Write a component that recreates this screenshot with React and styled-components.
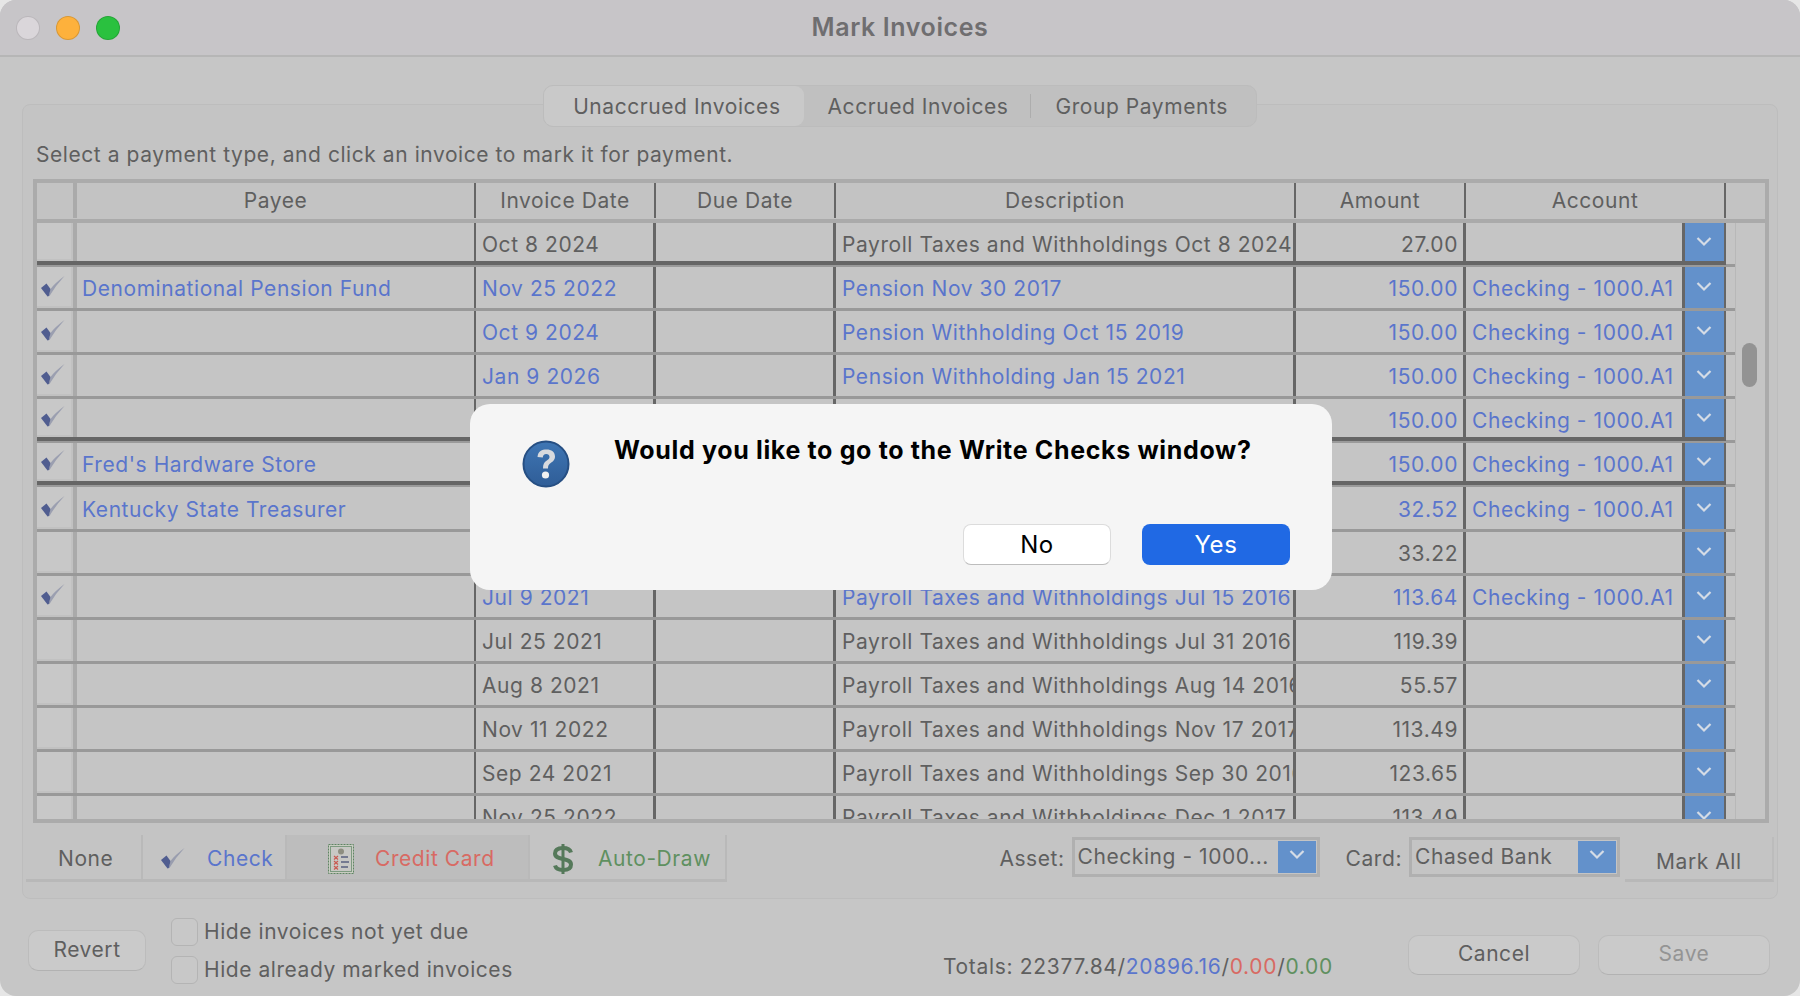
import styled, { createGlobalStyle } from "styled-components";

const GlobalStyle = createGlobalStyle`
  html, body {
    margin: 0;
    padding: 0;
    background: #e6e6e6;
  }
  * {
    box-sizing: border-box;
  }
`;

const blue = "#5a75cc";
const red = "#d86a63";
const green = "#5f9060";
const ink = "#5f5f5f";

const invoices = [
  { date: "Oct 8 2024", desc: "Payroll Taxes and Withholdings Oct 8 2024", amount: "27.00", heavy: true },
  { marked: true, payee: "Denominational Pension Fund", date: "Nov 25 2022", desc: "Pension Nov 30 2017", amount: "150.00" },
  { marked: true, date: "Oct 9 2024", desc: "Pension Withholding Oct 15 2019", amount: "150.00" },
  { marked: true, date: "Jan 9 2026", desc: "Pension Withholding Jan 15 2021", amount: "150.00" },
  { marked: true, amount: "150.00", heavy: true },
  { marked: true, payee: "Fred's Hardware Store", amount: "150.00", heavy: true },
  { marked: true, payee: "Kentucky State Treasurer", amount: "32.52" },
  { amount: "33.22" },
  { marked: true, date: "Jul 9 2021", desc: "Payroll Taxes and Withholdings Jul 15 2016", amount: "113.64" },
  { date: "Jul 25 2021", desc: "Payroll Taxes and Withholdings Jul 31 2016", amount: "119.39" },
  { date: "Aug 8 2021", desc: "Payroll Taxes and Withholdings Aug 14 2016", amount: "55.57" },
  { date: "Nov 11 2022", desc: "Payroll Taxes and Withholdings Nov 17 2017", amount: "113.49" },
  { date: "Sep 24 2021", desc: "Payroll Taxes and Withholdings Sep 30 2016", amount: "123.65" },
  { date: "Nov 25 2022", desc: "Payroll Taxes and Withholdings Dec 1 2017", amount: "113.49" },
];

const CheckMark = () => (
  <svg width="26" height="24" viewBox="0 0 26 24">
    <path d="M1 13 L6.5 8.5 L10.5 14 L9 21 L7.5 21.5 Z" fill="#505d90" />
    <path d="M8.5 21 L10.5 14 Q15 8 24.5 1 Q16 10 9.5 21 Z" fill="#7d84a0" opacity="0.6" />
  </svg>
);

const Chevron = () => (
  <svg width="16" height="11" viewBox="0 0 16 11" fill="none">
    <path d="M1.5 2 L8 8.5 L14.5 2" stroke="#d5dce6" strokeWidth="2.2" />
  </svg>
);

const LedgerIcon = () => (
  <svg width="26" height="30" viewBox="0 0 26 30">
    <rect x="0.5" y="0.5" width="25" height="29" fill="#c9cdc2" stroke="#5f8463" strokeDasharray="2 1" />
    <rect x="2.5" y="2.5" width="21" height="25" fill="#c8c8c4" stroke="#7d9a80" />
    <circle cx="13" cy="7.5" r="3" fill="#8e8e80" />
    <path d="M6 12 L10 15.5 M10 12 L6 15.5 M6 17 L10 20.5 M10 17 L6 20.5 M6 22 L10 25.5 M10 22 L6 25.5" stroke="#c9584f" strokeWidth="1.2" />
    <path d="M13 13 H20 M13 18 H21 M13 23 H20" stroke="#59607f" strokeWidth="1.3" />
  </svg>
);

const DollarIcon = () => (
  <svg width="22" height="32" viewBox="0 0 22 32" fill="none">
    <path d="M11 1 V31" stroke="#55795a" strokeWidth="3" />
    <path d="M19 9.5 C18 6 15 5 11 5 C6 5 3 7 3 10.5 C3 14 6.5 15 11 16 C15.5 17 19 18 19 21.5 C19 25 16 27 11 27 C7 27 4 26 3 22.5" stroke="#55795a" strokeWidth="4" />
  </svg>
);

const QuestionIcon = () => (
  <svg width="48" height="48" viewBox="0 0 48 48">
    <defs>
      <linearGradient id="qfill" x1="0" y1="0" x2="0" y2="1">
        <stop offset="0" stopColor="#3f76b4" />
        <stop offset="1" stopColor="#2f5d97" />
      </linearGradient>
    </defs>
    <circle cx="24" cy="24" r="22.5" fill="url(#qfill)" stroke="#264f83" strokeWidth="2" />
    <path d="M15.5 17 C16 11 20 9.5 24.5 9.5 C29.5 9.5 33 12 33 16.5 C33 20.5 30 22 28 23.5 C26.5 24.6 26 26 26 28.5 H21 C21 24.5 22 22.5 24.5 20.8 C26.5 19.5 27.5 18.5 27.5 17 C27.5 15 26.2 14 24.2 14 C22 14 21 15.5 20.8 17.5 Z" fill="#d8dade" />
    <circle cx="23.5" cy="35" r="3.6" fill="#f1f1f1" />
  </svg>
);

const App = () => {
  return (
    <>
      <GlobalStyle />
      <Window>
        <TitleBar>
          <Lights>
            <Light $color="#dad6da" />
            <Light $color="#fdb13c" />
            <Light $color="#2ac13f" />
          </Lights>
          <Title>Mark Invoices</Title>
        </TitleBar>

        <Panel>
          <Tabs>
            <Tab $active $left={29} $right={23}>Unaccrued Invoices</Tab>
            <Tab $divided $left={24} $right={22}>Accrued Invoices</Tab>
            <Tab $left={24} $right={28}>Group Payments</Tab>
          </Tabs>
          <Hint>Select a payment type, and click an invoice to mark it for payment.</Hint>

          <Table>
            <HeadRow>
              <HeadCell />
              <HeadCell $line>Payee</HeadCell>
              <HeadCell $line>Invoice Date</HeadCell>
              <HeadCell $line>Due Date</HeadCell>
              <HeadCell $line>Description</HeadCell>
              <HeadCell $line>Amount</HeadCell>
              <HeadCell $line>Account</HeadCell>
              <HeadCell />
            </HeadRow>
            <TableBody>
              <Rows>
                {invoices.map((row, i) => (
                  <Row key={i} $heavy={row.heavy} $marked={row.marked}>
                    <CheckCell>{row.marked && <CheckMark />}</CheckCell>
                    <Cell $heavy={row.heavy}>{row.payee}</Cell>
                    <Cell $heavy={row.heavy} $line>{row.date}</Cell>
                    <Cell $heavy={row.heavy} $line />
                    <Cell $heavy={row.heavy} $line>{row.desc}</Cell>
                    <Cell $heavy={row.heavy} $line $right>{row.amount}</Cell>
                    <Cell $heavy={row.heavy} $line>{row.marked ? "Checking - 1000.A1" : ""}</Cell>
                    <DropCell><Chevron /></DropCell>
                  </Row>
                ))}
              </Rows>
              <ScrollTrack>
                <ScrollThumb />
              </ScrollTrack>
            </TableBody>
          </Table>

          <Toolbar>
            <Segments>
              <Segment $width={117} $pad={32}>None</Segment>
              <Segment $width={144} $pad={17} $gap={21} $color={blue}>
                <CheckMark />Check
              </Segment>
              <Segment $width={243} $pad={41} $gap={21} $color={red} $selected>
                <LedgerIcon />Credit Card
              </Segment>
              <Segment $width={197} $pad={22} $gap={24} $color={green}>
                <DollarIcon />Auto-Draw
              </Segment>
            </Segments>
            <Fields>
              <Label>Asset:</Label>
              <Combo $width={248}>
                <ComboText>Checking - 1000...</ComboText>
                <ComboDrop><Chevron /></ComboDrop>
              </Combo>
              <Label $left={26}>Card:</Label>
              <Combo $width={211}>
                <ComboText>Chased Bank</ComboText>
                <ComboDrop><Chevron /></ComboDrop>
              </Combo>
              <MarkAll>Mark All</MarkAll>
            </Fields>
          </Toolbar>
        </Panel>

        <Footer>
          <PushButton $width={118} $height={41} $lift={4}>Revert</PushButton>
          <Options>
            <Option><Box />Hide invoices not yet due</Option>
            <Option><Box />Hide already marked invoices</Option>
          </Options>
          <Totals>
            Totals: 22377.84/<Tint $color={blue}>20896.16</Tint>/<Tint $color={red}>0.00</Tint>/<Tint $color={green}>0.00</Tint>
          </Totals>
          <PushButton $width={172} $height={40}>Cancel</PushButton>
          <PushButton $width={172} $height={40} $off>Save</PushButton>
        </Footer>

        <Dialog>
          <DialogIcon><QuestionIcon /></DialogIcon>
          <DialogMain>
            <DialogText>Would you like to go to the Write Checks window?</DialogText>
            <DialogButtons>
              <DialogButton>No</DialogButton>
              <DialogButton $primary>Yes</DialogButton>
            </DialogButtons>
          </DialogMain>
        </Dialog>
      </Window>
    </>
  );
};

export default App;

const Window = styled.div`
  position: relative;
  width: 1800px;
  height: 996px;
  overflow: hidden;
  border-radius: 16px;
  background: #c6c6c6;
  color: ${ink};
  font-family: Inter, "Liberation Sans", sans-serif;
  font-size: 21px;
  letter-spacing: 0.56px;
`;
const TitleBar = styled.div`
  display: grid;
  grid-template-columns: 1fr auto 1fr;
  align-items: center;
  height: 57px;
  padding: 0 16px;
  background: #c7c5c8;
  border-bottom: 2px solid #b6b6b6;
`;
const Lights = styled.div`
  display: flex;
  gap: 16px;
`;
const Light = styled.span`
  width: 24px;
  height: 24px;
  border-radius: 50%;
  background: ${(p) => p.$color};
  border: 1px solid rgba(0, 0, 0, 0.14);
`;
const Title = styled.div`
  padding-bottom: 2px;
  font-size: 25px;
  font-weight: 600;
  letter-spacing: 0.6px;
  color: #6f6e70;
`;
const Panel = styled.div`
  display: flex;
  flex-direction: column;
  height: 795px;
  margin: 47px 22px 0;
  background: #c4c4c4;
  border: 1px solid #bdbdbd;
  border-radius: 8px;
`;
const Tabs = styled.div`
  display: flex;
  align-self: center;
  align-items: center;
  height: 42px;
  margin-top: -20px;
  background: #c0c0c0;
  border: 1px solid #bcbcbc;
  border-radius: 10px;
`;
const Tab = styled.div`
  display: flex;
  align-items: center;
  justify-content: center;
  height: 100%;
  padding: 0 ${(p) => p.$right}px 0 ${(p) => p.$left}px;
  border-radius: 9px;
  background: ${(p) => (p.$active ? "#c9c9c9" : "transparent")};
  border-right: ${(p) => (p.$divided ? "1px solid #adadad" : "none")};
  ${(p) => p.$divided && "height: 24px; border-radius: 0;"}
`;
const Hint = styled.div`
  height: 52px;
  padding: 11px 0 0 13px;
  line-height: 34px;
`;
const Table = styled.div`
  display: flex;
  flex-direction: column;
  width: 1736px;
  height: 644px;
  margin-left: 10px;
  border: 4px solid #ababab;
  overflow: hidden;
`;
const HeadRow = styled.div`
  display: grid;
  grid-template-columns: 40px 399px 180px 180px 460px 170px 219px 41px 39px;
  flex: none;
  height: 40px;
  padding-bottom: 1px;
  border-bottom: 4px solid #aaaaaa;
  background: #c3c3c3;
`;
const HeadCell = styled.div`
  display: flex;
  align-items: center;
  justify-content: center;
  &:nth-child(1) {
    border-right: 4px solid #aaaaaa;
  }
  &:nth-child(7) {
    grid-column: span 2;
  }
  ${(p) => p.$line && "border-right: 2px solid #666666;"}
`;
const TableBody = styled.div`
  display: flex;
  flex: 1;
  min-height: 0;
  background: #c5c5c5;
`;
const Rows = styled.div`
  flex: none;
  width: 1698px;
`;
const Row = styled.div`
  display: grid;
  grid-template-columns: 40px 399px 180px 180px 460px 170px 219px 41px;
  width: 1698px;
  height: 44.08px;
  padding-bottom: ${(p) => (p.$heavy ? 6 : 3)}px;
  color: ${(p) => (p.$marked ? blue : ink)};
  background: ${(p) =>
    p.$heavy
      ? "linear-gradient(to bottom, transparent 38px, #666666 38px, #666666 42px, #9a9a9a 42px) no-repeat 0 0 / 1689px 100%, linear-gradient(#9a9a9a, #9a9a9a) no-repeat 100% 100% / 9px 3px"
      : "linear-gradient(#999999, #999999) no-repeat 0 100% / 100% 3px"};
`;
const Cell = styled.div`
  display: flex;
  align-items: center;
  justify-content: ${(p) => (p.$right ? "flex-end" : "flex-start")};
  min-width: 0;
  padding: ${(p) => (p.$heavy ? 5 : 2)}px 5px 0 6px;
  white-space: nowrap;
  overflow: hidden;
  border-right: 3px solid #666666;
  ${(p) => !p.$line && "border-right-width: 2px; padding-left: 5px;"}
`;
const CheckCell = styled.div`
  display: flex;
  align-items: center;
  justify-content: center;
  padding: 0 5px 2px 0;
  background: #c8c8c8;
  box-shadow: inset -2px -2px 0 #c1c1c1;
  border-right: 4px solid #aaaaaa;
`;
const DropCell = styled.div`
  display: flex;
  align-items: center;
  justify-content: center;
  padding: 0 2px 2px 0;
  background: #6391cb;
  border-right: 2px solid #666666;
`;
const ScrollTrack = styled.div`
  flex: 1;
  padding: 120px 8px 0 6px;
  border-left: 1px solid #b8b8b8;
`;
const ScrollThumb = styled.div`
  height: 44px;
  border-radius: 8px;
  background: #939393;
`;
const Toolbar = styled.div`
  display: flex;
  justify-content: space-between;
  padding: 12px 3px 0 3px;
`;
const Segments = styled.div`
  display: flex;
  height: 47px;
  border-bottom: 3px solid #b8b8b8;
`;
const Segment = styled.div`
  display: flex;
  align-items: center;
  gap: ${(p) => p.$gap || 0}px;
  width: ${(p) => p.$width}px;
  padding-left: ${(p) => p.$pad}px;
  padding-top: 3px;
  color: ${(p) => p.$color || ink};
  background: ${(p) => (p.$selected ? "#bdbdbd" : "transparent")};
  border-right: 2px solid #b9b9b9;
  white-space: nowrap;
`;
const Fields = styled.div`
  display: flex;
  align-items: flex-start;
  padding-top: 2px;
`;
const Label = styled.span`
  margin: 7px 7px 0 ${(p) => p.$left || 0}px;
  line-height: 30px;
`;
const Combo = styled.div`
  display: flex;
  justify-content: space-between;
  width: ${(p) => p.$width}px;
  height: 40px;
  padding: 1px;
  border: 3px solid #b0b0b0;
`;
const ComboText = styled.span`
  padding-left: 2px;
  line-height: 31px;
  white-space: nowrap;
`;
const ComboDrop = styled.span`
  display: flex;
  align-items: center;
  justify-content: center;
  width: 38px;
  padding-bottom: 6px;
  background: #6391cb;
`;
const MarkAll = styled.div`
  width: 149px;
  height: 45px;
  margin-left: 5px;
  padding: 7px 0 0 31px;
  line-height: 36px;
  white-space: nowrap;
  border-bottom: 3px solid #b8b8b8;
  border-right: 2px solid #bcbcbc;
`;
const Footer = styled.div`
  display: flex;
  align-items: flex-end;
  height: 97px;
  padding: 0 30px 21px 28px;
`;
const PushButton = styled.div`
  display: flex;
  align-items: center;
  justify-content: center;
  flex: none;
  width: ${(p) => p.$width}px;
  height: ${(p) => p.$height}px;
  margin: 0 18px ${(p) => p.$lift || 0}px 0;
  padding-bottom: 3px;
  border-radius: 10px;
  background: #cacaca;
  border: 1px solid #bcbcbc;
  border-bottom-color: #b2b2b2;
  color: ${(p) => (p.$off ? "#949494" : ink)};
  &:last-child {
    margin-right: 0;
  }
`;
const Options = styled.div`
  display: flex;
  flex-direction: column;
  gap: 10px;
  width: 772px;
  margin: 0 0 -9px 7px;
`;
const Option = styled.label`
  display: flex;
  align-items: center;
  gap: 6px;
  height: 28px;
  line-height: 28px;
`;
const Box = styled.span`
  width: 27px;
  height: 28px;
  border: 1px solid #b4b4b4;
  border-radius: 6px;
  background: #c8c8c8;
`;
const Totals = styled.div`
  width: 465px;
  margin-bottom: -6px;
  letter-spacing: 0.68px;
  line-height: 28px;
  white-space: nowrap;
`;
const Tint = styled.span`
  color: ${(p) => p.$color};
`;
const Dialog = styled.div`
  position: absolute;
  left: 470px;
  top: 404px;
  display: flex;
  width: 862px;
  height: 186px;
  padding: 33px 42px 25px 52px;
  border-radius: 20px;
  background: #f5f5f5;
  color: #000;
`;
const DialogIcon = styled.div`
  flex: none;
  width: 92px;
  padding-top: 3px;
`;
const DialogMain = styled.div`
  display: flex;
  flex-direction: column;
  justify-content: space-between;
  flex: 1;
`;
const DialogText = styled.div`
  font-size: 25px;
  font-weight: 700;
  letter-spacing: 0.65px;
  line-height: 26px;
  white-space: nowrap;
`;
const DialogButtons = styled.div`
  display: flex;
  justify-content: flex-end;
  gap: 31px;
`;
const DialogButton = styled.div`
  display: flex;
  align-items: center;
  justify-content: center;
  width: 148px;
  height: 41px;
  border-radius: 8px;
  font-size: 24px;
  color: ${(p) => (p.$primary ? "#fff" : "#000")};
  background: ${(p) => (p.$primary ? "#2069e4" : "#fff")};
  ${(p) => !p.$primary && "border: 1px solid #dcdcdc; border-bottom-color: #bdbdbd;"}
`;
